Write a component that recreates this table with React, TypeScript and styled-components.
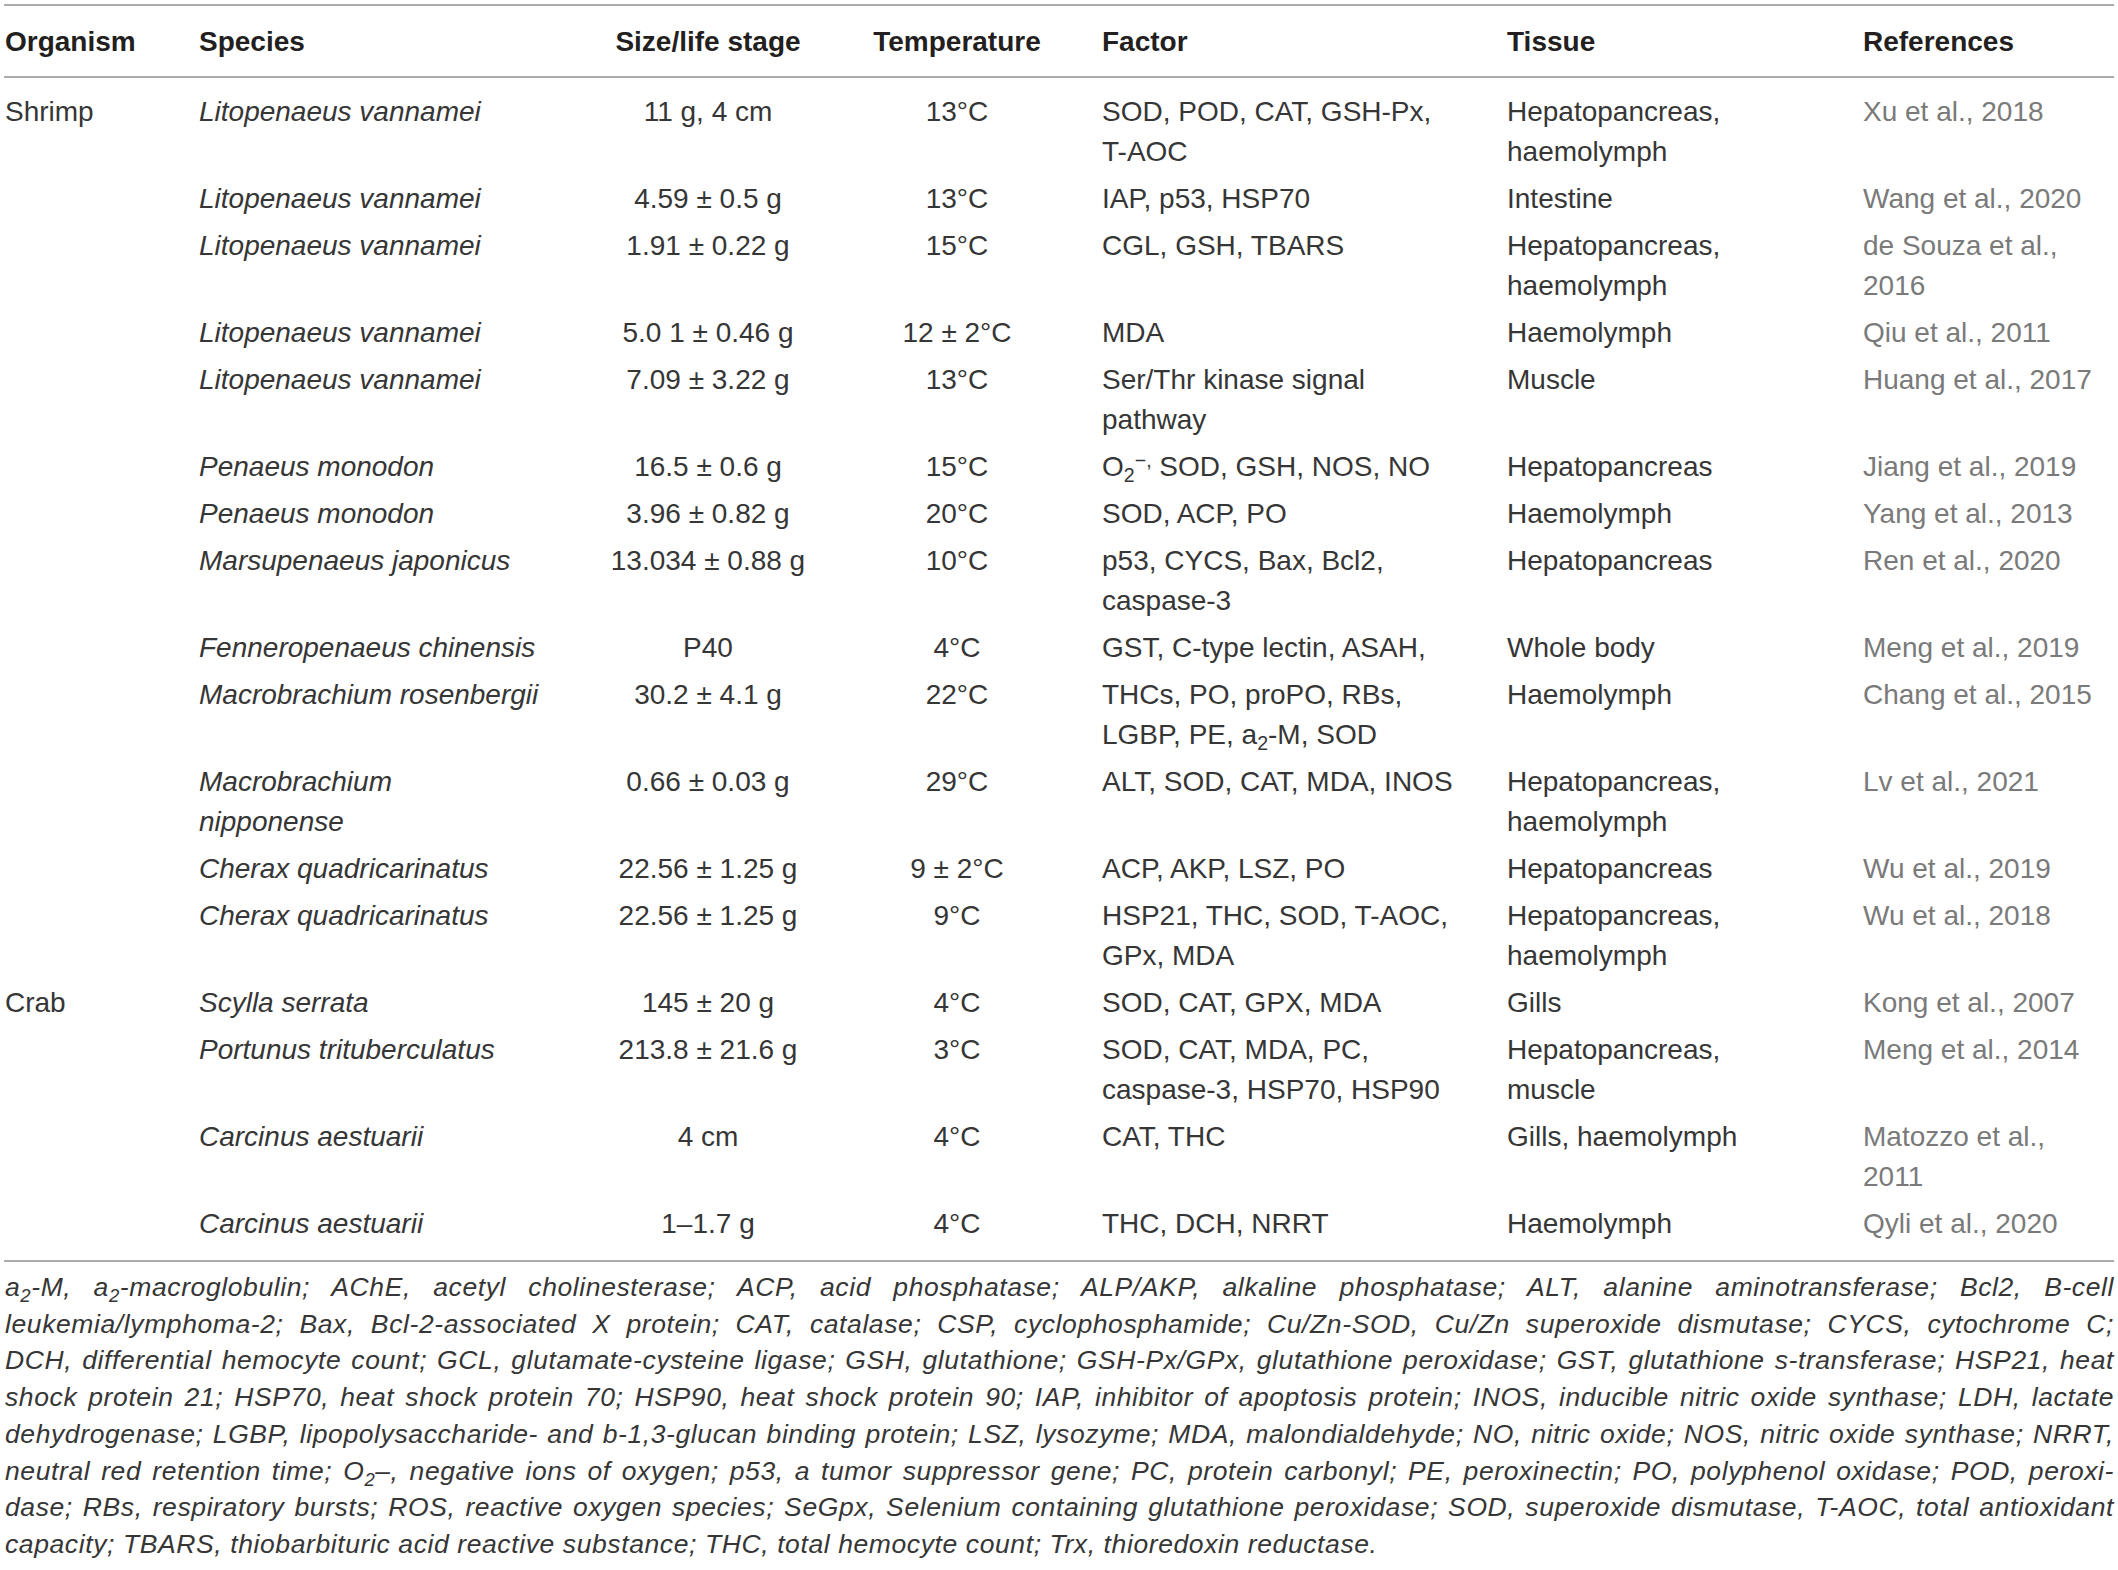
import React from "react";
import styled, { createGlobalStyle } from "styled-components";

const GlobalStyle = createGlobalStyle`
  html, body { margin: 0; padding: 0; background: #ffffff; }
  body {
    font-family: "Liberation Sans", Arial, Helvetica, sans-serif;
    color: #363636;
  }
`;

const COLS = "195px 391px 236px 262px 419px 356px 251px";

const Page = styled.div`
  width: 2110px;
  margin: 4px 0 0 4px;
`;

const HeaderRow = styled.div`
  display: grid;
  grid-template-columns: ${COLS};
  padding: 16px 0 14px;
  border-top: 2px solid #ababab;
  border-bottom: 2px solid #ababab;
  font-size: 28px;
  line-height: 40px;
  font-weight: 700;
  color: #231f20;
`;

const Body = styled.div`
  padding: 10.5px 0 12.5px;
  border-bottom: 2px solid #ababab;
`;

const Row = styled.div`
  display: grid;
  grid-template-columns: ${COLS};
  padding: 3.5px 0;
  font-size: 28px;
  line-height: 40px;
`;

const Cell = styled.div<{
  $align?: "left" | "center";
  $indent?: number;
  $italic?: boolean;
  $muted?: boolean;
}>`
  text-align: ${(p) => p.$align ?? "left"};
  padding-left: ${(p) => p.$indent ?? 0}px;
  font-style: ${(p) => (p.$italic ? "italic" : "normal")};
  color: ${(p) => (p.$muted ? "#7a7a7a" : "inherit")};
`;

const Line = styled.div`
  white-space: nowrap;
`;

const Sub = styled.sub`
  font-size: 0.7em;
  vertical-align: -0.32em;
  line-height: 0;
`;

const Sup = styled.sup`
  font-size: 0.7em;
  vertical-align: 0.45em;
  line-height: 0;
`;

const Notes = styled.div`
  padding: 7px 0 0 1px;
  font-size: 26.5px;
  line-height: 36.7px;
  letter-spacing: 0.6px;
  font-style: italic;
  color: #363636;
`;

const NoteLine = styled.div<{ $last?: boolean }>`
  text-align: justify;
  text-align-last: ${(p) => (p.$last ? "left" : "justify")};
`;

type L = React.ReactNode;

interface RowData {
  org?: string;
  species: L[];
  size: string;
  temp: string;
  factor: L[];
  tissue: L[];
  refs: L[];
}

const rows: RowData[] = [
  {
    org: "Shrimp",
    species: ["Litopenaeus vannamei"],
    size: "11 g, 4 cm",
    temp: "13°C",
    factor: ["SOD, POD, CAT, GSH-Px,", "T-AOC"],
    tissue: ["Hepatopancreas,", "haemolymph"],
    refs: ["Xu et al., 2018"],
  },
  {
    species: ["Litopenaeus vannamei"],
    size: "4.59 ± 0.5 g",
    temp: "13°C",
    factor: ["IAP, p53, HSP70"],
    tissue: ["Intestine"],
    refs: ["Wang et al., 2020"],
  },
  {
    species: ["Litopenaeus vannamei"],
    size: "1.91 ± 0.22 g",
    temp: "15°C",
    factor: ["CGL, GSH, TBARS"],
    tissue: ["Hepatopancreas,", "haemolymph"],
    refs: ["de Souza et al.,", "2016"],
  },
  {
    species: ["Litopenaeus vannamei"],
    size: "5.0 1 ± 0.46 g",
    temp: "12 ± 2°C",
    factor: ["MDA"],
    tissue: ["Haemolymph"],
    refs: ["Qiu et al., 2011"],
  },
  {
    species: ["Litopenaeus vannamei"],
    size: "7.09 ± 3.22 g",
    temp: "13°C",
    factor: ["Ser/Thr kinase signal", "pathway"],
    tissue: ["Muscle"],
    refs: ["Huang et al., 2017"],
  },
  {
    species: ["Penaeus monodon"],
    size: "16.5 ± 0.6 g",
    temp: "15°C",
    factor: [
      <>
        O<Sub>2</Sub>
        <Sup>−,</Sup> SOD, GSH, NOS, NO
      </>,
    ],
    tissue: ["Hepatopancreas"],
    refs: ["Jiang et al., 2019"],
  },
  {
    species: ["Penaeus monodon"],
    size: "3.96 ± 0.82 g",
    temp: "20°C",
    factor: ["SOD, ACP, PO"],
    tissue: ["Haemolymph"],
    refs: ["Yang et al., 2013"],
  },
  {
    species: ["Marsupenaeus japonicus"],
    size: "13.034 ± 0.88 g",
    temp: "10°C",
    factor: ["p53, CYCS, Bax, Bcl2,", "caspase-3"],
    tissue: ["Hepatopancreas"],
    refs: ["Ren et al., 2020"],
  },
  {
    species: ["Fenneropenaeus chinensis"],
    size: "P40",
    temp: "4°C",
    factor: ["GST, C-type lectin, ASAH,"],
    tissue: ["Whole body"],
    refs: ["Meng et al., 2019"],
  },
  {
    species: ["Macrobrachium rosenbergii"],
    size: "30.2 ± 4.1 g",
    temp: "22°C",
    factor: [
      "THCs, PO, proPO, RBs,",
      <>
        LGBP, PE, a<Sub>2</Sub>-M, SOD
      </>,
    ],
    tissue: ["Haemolymph"],
    refs: ["Chang et al., 2015"],
  },
  {
    species: ["Macrobrachium", "nipponense"],
    size: "0.66 ± 0.03 g",
    temp: "29°C",
    factor: ["ALT, SOD, CAT, MDA, INOS"],
    tissue: ["Hepatopancreas,", "haemolymph"],
    refs: ["Lv et al., 2021"],
  },
  {
    species: ["Cherax quadricarinatus"],
    size: "22.56 ± 1.25 g",
    temp: "9 ± 2°C",
    factor: ["ACP, AKP, LSZ, PO"],
    tissue: ["Hepatopancreas"],
    refs: ["Wu et al., 2019"],
  },
  {
    species: ["Cherax quadricarinatus"],
    size: "22.56 ± 1.25 g",
    temp: "9°C",
    factor: ["HSP21, THC, SOD, T-AOC,", "GPx, MDA"],
    tissue: ["Hepatopancreas,", "haemolymph"],
    refs: ["Wu et al., 2018"],
  },
  {
    org: "Crab",
    species: ["Scylla serrata"],
    size: "145 ± 20 g",
    temp: "4°C",
    factor: ["SOD, CAT, GPX, MDA"],
    tissue: ["Gills"],
    refs: ["Kong et al., 2007"],
  },
  {
    species: ["Portunus trituberculatus"],
    size: "213.8 ± 21.6 g",
    temp: "3°C",
    factor: ["SOD, CAT, MDA, PC,", "caspase-3, HSP70, HSP90"],
    tissue: ["Hepatopancreas,", "muscle"],
    refs: ["Meng et al., 2014"],
  },
  {
    species: ["Carcinus aestuarii"],
    size: "4 cm",
    temp: "4°C",
    factor: ["CAT, THC"],
    tissue: ["Gills, haemolymph"],
    refs: ["Matozzo et al.,", "2011"],
  },
  {
    species: ["Carcinus aestuarii"],
    size: "1–1.7 g",
    temp: "4°C",
    factor: ["THC, DCH, NRRT"],
    tissue: ["Haemolymph"],
    refs: ["Qyli et al., 2020"],
  },
];

const notes: L[] = [
  <>
    a<Sub>2</Sub>-M, a<Sub>2</Sub>-macroglobulin; AChE, acetyl cholinesterase;
    ACP, acid phosphatase; ALP/AKP, alkaline phosphatase; ALT, alanine
    aminotransferase; Bcl2, B-cell
  </>,
  "leukemia/lymphoma-2; Bax, Bcl-2-associated X protein; CAT, catalase; CSP, cyclophosphamide; Cu/Zn-SOD, Cu/Zn superoxide dismutase; CYCS, cytochrome C;",
  "DCH, differential hemocyte count; GCL, glutamate-cysteine ligase; GSH, glutathione; GSH-Px/GPx, glutathione peroxidase; GST, glutathione s-transferase; HSP21, heat",
  "shock protein 21; HSP70, heat shock protein 70; HSP90, heat shock protein 90; IAP, inhibitor of apoptosis protein; INOS, inducible nitric oxide synthase; LDH, lactate",
  "dehydrogenase; LGBP, lipopolysaccharide- and b-1,3-glucan binding protein; LSZ, lysozyme; MDA, malondialdehyde; NO, nitric oxide; NOS, nitric oxide synthase; NRRT,",
  <>
    neutral red retention time; O<Sub>2</Sub>–, negative ions of oxygen; p53, a
    tumor suppressor gene; PC, protein carbonyl; PE, peroxinectin; PO,
    polyphenol oxidase; POD, peroxi-
  </>,
  "dase; RBs, respiratory bursts; ROS, reactive oxygen species; SeGpx, Selenium containing glutathione peroxidase; SOD, superoxide dismutase, T-AOC, total antioxidant",
  "capacity; TBARS, thiobarbituric acid reactive substance; THC, total hemocyte count; Trx, thioredoxin reductase.",
];

const Lines: React.FC<{ items: L[] }> = ({ items }) => (
  <>
    {items.map((l, i) => (
      <Line key={i}>{l}</Line>
    ))}
  </>
);

export default function App() {
  return (
    <>
      <GlobalStyle />
      <Page>
        <HeaderRow>
          <Cell $indent={1}>Organism</Cell>
          <Cell>Species</Cell>
          <Cell $align="center">Size/life stage</Cell>
          <Cell $align="center">Temperature</Cell>
          <Cell $indent={14}>Factor</Cell>
          <Cell>Tissue</Cell>
          <Cell>References</Cell>
        </HeaderRow>
        <Body>
          {rows.map((r, i) => (
            <Row key={i}>
              <Cell $indent={1}>{r.org ?? ""}</Cell>
              <Cell $italic>
                <Lines items={r.species} />
              </Cell>
              <Cell $align="center">{r.size}</Cell>
              <Cell $align="center">{r.temp}</Cell>
              <Cell $indent={14}>
                <Lines items={r.factor} />
              </Cell>
              <Cell>
                <Lines items={r.tissue} />
              </Cell>
              <Cell $muted>
                <Lines items={r.refs} />
              </Cell>
            </Row>
          ))}
        </Body>
        <Notes>
          {notes.map((n, i) => (
            <NoteLine key={i} $last={i === notes.length - 1}>
              {n}
            </NoteLine>
          ))}
        </Notes>
      </Page>
    </>
  );
}
